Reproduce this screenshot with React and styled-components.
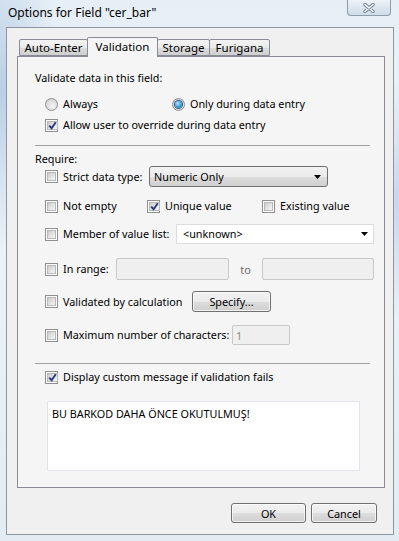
import styled, { createGlobalStyle } from "styled-components";

const GlobalStyle = createGlobalStyle`
  html, body { margin: 0; padding: 0; }
  body {
    width: 399px;
    height: 541px;
    overflow: hidden;
    font-family: "Segoe UI", "Noto Sans", sans-serif;
    font-size: 10.8px;
    color: #000;
  }
`;

const Window = styled.div`
  width: 399px;
  height: 541px;
  box-sizing: border-box;
  display: flex;
  flex-direction: column;
  padding: 0 5px 6px 6px;
  background:
    radial-gradient(ellipse 60px 160px at 0px 90px, #b9cfe6 0%, rgba(185, 207, 230, 0) 100%),
    radial-gradient(ellipse 50px 120px at 399px 200px, #c4d8ec 0%, rgba(196, 216, 236, 0) 100%),
    linear-gradient(180deg, #e6eef6 0%, #eef3f8 30%, #e3ebf3 100%);
`;

const TitleBar = styled.div`
  height: 27px;
  display: flex;
  align-items: flex-start;
  justify-content: space-between;
  flex-shrink: 0;
`;

const Title = styled.div`
  font-size: 12px;
  line-height: 16px;
  margin: 5px 0 0 2px;
  color: #000;
`;

const CloseButton = styled.div`
  width: 44px;
  height: 16px;
  margin-right: 3px;
  box-sizing: border-box;
  border: 1px solid #8e9cae;
  border-top: none;
  border-radius: 0 0 4px 4px;
  background: linear-gradient(180deg, #eef3f8 0%, #dbe5ef 55%, #d0dce9 100%);
  display: flex;
  align-items: center;
  justify-content: center;
`;

const Client = styled.div`
  flex: 1;
  box-sizing: border-box;
  border: 1px solid #8c96a1;
  background: #f0f0f0;
  padding: 9px 8px 0 10px;
  display: flex;
  flex-direction: column;
`;

const TabStrip = styled.div`
  display: flex;
  align-items: flex-end;
  height: 20px;
  margin-bottom: -1px;
  padding-left: 2px;
`;

const Tab = styled.div`
  width: ${(p) => p.$w}px;
  height: ${(p) => (p.$active ? 20 : 17)}px;
  margin-bottom: ${(p) => (p.$active ? 0 : 1)}px;
  margin-left: ${(p) => (p.$first ? 0 : -1)}px;
  box-sizing: border-box;
  border: 1px solid #898c95;
  border-bottom: ${(p) => (p.$active ? "none" : "1px solid #898c95")};
  border-radius: 2px 2px 0 0;
  background: ${(p) =>
    p.$active ? "#f5f5f5" : "linear-gradient(180deg, #f3f3f3 0%, #ebebeb 50%, #dddddd 51%, #cfcfcf 100%)"};
  position: relative;
  z-index: ${(p) => (p.$active ? 2 : 1)};
  display: flex;
  align-items: center;
  justify-content: center;
  font-size: 11.5px;
  padding-bottom: ${(p) => (p.$active ? 2 : 0)}px;
`;

const Panel = styled.div`
  position: relative;
  z-index: 1;
  height: 432px;
  box-sizing: border-box;
  border: 1px solid #898c95;
  background: #f5f5f5;
  padding: 13px 14px 0 17px;
  display: flex;
  flex-direction: column;
`;

const Row = styled.div`
  display: flex;
  align-items: center;
  height: ${(p) => p.$h}px;
  margin-top: ${(p) => p.$mt || 0}px;
  padding-left: ${(p) => p.$indent || 0}px;
  flex-shrink: 0;
`;

const Divider = styled.div`
  height: 1px;
  margin-top: ${(p) => p.$mt}px;
  background: #a0a0a0;
  flex-shrink: 0;
`;

const Item = styled.label`
  display: flex;
  align-items: center;
  gap: 5px;
  width: ${(p) => (p.$w ? `${p.$w}px` : "auto")};
  flex-shrink: 0;
  white-space: nowrap;
`;

const Box = styled.span`
  width: 13px;
  height: 13px;
  box-sizing: border-box;
  border: 1px solid #8e8f8f;
  background: #fff;
  padding: 1px;
  display: inline-flex;
  flex-shrink: 0;
`;

const BoxInner = styled.span`
  flex: 1;
  background: linear-gradient(135deg, #cbcbcb 0%, #e4e4e4 55%, #f6f6f6 100%);
  border: 1px solid #b8b8b8;
  display: flex;
  align-items: center;
  justify-content: center;
`;

const Check = ({ checked }) => (
  <Box>
    <BoxInner>
      {checked && (
        <svg width="9" height="9" viewBox="0 0 9 9">
          <path d="M1.2 4.6 L3.6 7.2 L7.8 1.2" fill="none" stroke="#26367b" strokeWidth="1.8" />
        </svg>
      )}
    </BoxInner>
  </Box>
);

const RadioCircle = styled.span`
  width: 13px;
  height: 13px;
  box-sizing: border-box;
  border-radius: 50%;
  border: 1px solid #8e8f8f;
  background: radial-gradient(circle at 60% 65%, #f4f4f4 0%, #dadada 60%, #c6c6c6 100%);
  display: inline-flex;
  align-items: center;
  justify-content: center;
  flex-shrink: 0;
`;

const RadioDot = styled.span`
  width: 7px;
  height: 7px;
  border-radius: 50%;
  background: radial-gradient(circle at 40% 35%, #bde6fb 0%, #4fa9e0 45%, #17609f 100%);
  box-shadow: 0 0 0 1px #2f5f8a;
`;

const Radio = ({ checked }) => (
  <RadioCircle>{checked && <RadioDot />}</RadioCircle>
);

const Text = styled.span`
  line-height: 14px;
`;

const DropButton = styled.div`
  width: ${(p) => p.$w}px;
  height: 21px;
  box-sizing: border-box;
  border: 1px solid #707070;
  border-radius: 3px;
  background: linear-gradient(180deg, #f2f2f2 0%, #ebebeb 50%, #dddddd 51%, #cfcfcf 100%);
  display: flex;
  align-items: center;
  justify-content: space-between;
  padding: 0 6px 0 4px;
  flex-shrink: 0;
`;

const Arrow = () => (
  <svg width="7" height="4" viewBox="0 0 7 4">
    <path d="M0 0 H7 L3.5 4 Z" fill="#000" />
  </svg>
);

const FlatSelect = styled.div`
  width: ${(p) => p.$w}px;
  height: 20px;
  box-sizing: border-box;
  border: 1px solid #dcdcdc;
  background: #fff;
  display: flex;
  align-items: center;
  justify-content: space-between;
  padding: 0 5px 0 6px;
  flex-shrink: 0;
`;

const Field = styled.div`
  width: ${(p) => p.$w}px;
  height: ${(p) => p.$h || 22}px;
  box-sizing: border-box;
  border: 1px solid #c8c8c8;
  border-radius: 2px;
  background: #efefef;
  color: #8a8a8a;
  display: flex;
  align-items: center;
  padding-left: 3px;
  flex-shrink: 0;
`;

const To = styled.span`
  width: 33px;
  text-align: center;
  color: #6d6d6d;
  flex-shrink: 0;
`;

const Button = styled.div`
  width: ${(p) => p.$w}px;
  height: ${(p) => p.$h}px;
  box-sizing: border-box;
  border: 1px solid #707070;
  border-radius: 3px;
  background: linear-gradient(180deg, #f2f2f2 0%, #ebebeb 50%, #dddddd 51%, #cfcfcf 100%);
  box-shadow: inset 0 0 0 1px rgba(255, 255, 255, 0.7);
  display: flex;
  align-items: center;
  justify-content: center;
  flex-shrink: 0;
`;

const MessageBox = styled.div`
  height: 70px;
  margin: 17px 10px 0 12px;
  box-sizing: border-box;
  border: 1px solid #e2e3ea;
  background: #fff;
  padding: 5px 4px;
  line-height: 14px;
  flex-shrink: 0;
`;

const Footer = styled.div`
  display: flex;
  justify-content: flex-end;
  gap: 5px;
  margin-top: 15px;
  padding-right: 8px;
`;

export default function App() {
  return (
    <Window>
      <GlobalStyle />
      <TitleBar>
        <Title>Options for Field "cer_bar"</Title>
        <CloseButton>
          <svg width="12" height="10" viewBox="0 0 12 10">
            <path d="M2 1.5 L10 8.5 M10 1.5 L2 8.5" stroke="#6e7e92" strokeWidth="3.4" strokeLinecap="round" />
            <path d="M2 1.5 L10 8.5 M10 1.5 L2 8.5" stroke="#fff" strokeWidth="1.6" strokeLinecap="round" />
          </svg>
        </CloseButton>
      </TitleBar>
      <Client>
        <TabStrip>
          <Tab $w={69} $first>Auto-Enter</Tab>
          <Tab $w={71} $active>Validation</Tab>
          <Tab $w={53}>Storage</Tab>
          <Tab $w={61}>Furigana</Tab>
        </TabStrip>
        <Panel>
          <Row $h={16}>
            <Text>Validate data in this field:</Text>
          </Row>
          <Row $h={16} $mt={10} $indent={10}>
            <Item $w={127}>
              <Radio />
              <Text>Always</Text>
            </Item>
            <Item>
              <Radio checked />
              <Text>Only during data entry</Text>
            </Item>
          </Row>
          <Row $h={16} $mt={5} $indent={10}>
            <Item>
              <Check checked />
              <Text>Allow user to override during data entry</Text>
            </Item>
          </Row>
          <Divider $mt={12} />
          <Row $h={14} $mt={6}>
            <Text>Require:</Text>
          </Row>
          <Row $h={21} $indent={10}>
            <Item $w={104}>
              <Check />
              <Text>Strict data type:</Text>
            </Item>
            <DropButton $w={179}>
              <Text>Numeric Only</Text>
              <Arrow />
            </DropButton>
          </Row>
          <Row $h={16} $mt={11} $indent={10}>
            <Item $w={102}>
              <Check />
              <Text>Not empty</Text>
            </Item>
            <Item $w={115}>
              <Check checked />
              <Text>Unique value</Text>
            </Item>
            <Item>
              <Check />
              <Text>Existing value</Text>
            </Item>
          </Row>
          <Row $h={20} $mt={10} $indent={10}>
            <Item $w={131}>
              <Check />
              <Text>Member of value list:</Text>
            </Item>
            <FlatSelect $w={198}>
              <Text>&lt;unknown&gt;</Text>
              <Arrow />
            </FlatSelect>
          </Row>
          <Row $h={22} $mt={14} $indent={10}>
            <Item $w={71}>
              <Check />
              <Text>In range:</Text>
            </Item>
            <Field $w={113} />
            <To>to</To>
            <Field $w={112} />
          </Row>
          <Row $h={21} $mt={11} $indent={10}>
            <Item $w={147}>
              <Check />
              <Text>Validated by calculation</Text>
            </Item>
            <Button $w={79} $h={21}>Specify...</Button>
          </Row>
          <Row $h={20} $mt={13} $indent={10}>
            <Item $w={187}>
              <Check />
              <Text>Maximum number of characters:</Text>
            </Item>
            <Field $w={58} $h={20}>1</Field>
          </Row>
          <Divider $mt={18} />
          <Row $h={14} $mt={6} $indent={10}>
            <Item>
              <Check checked />
              <Text>Display custom message if validation fails</Text>
            </Item>
          </Row>
          <MessageBox>BU BARKOD DAHA ÖNCE OKUTULMUŞ!</MessageBox>
        </Panel>
        <Footer>
          <Button $w={75} $h={20}>OK</Button>
          <Button $w={66} $h={20}>Cancel</Button>
        </Footer>
      </Client>
    </Window>
  );
}
